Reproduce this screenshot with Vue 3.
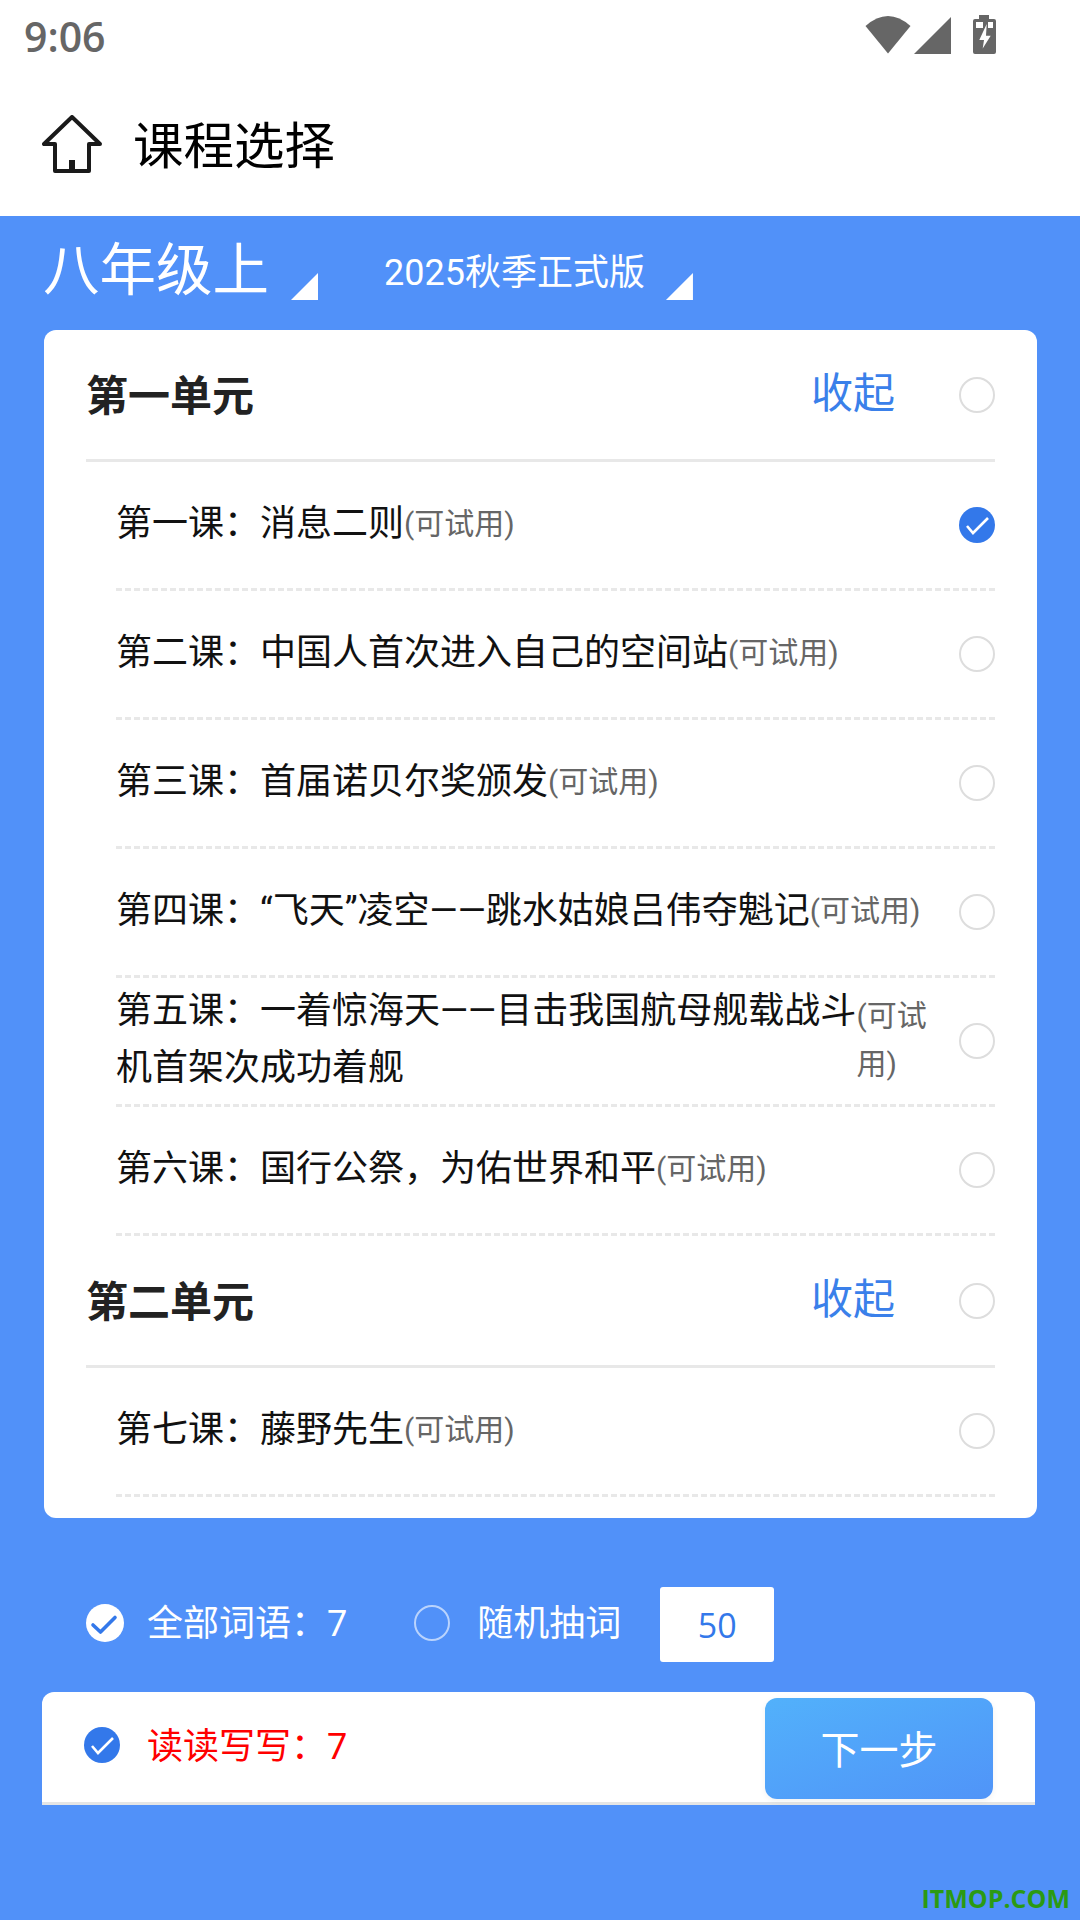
<template>
  <div class="page">
    <!-- STATUS BAR -->
    <div class="status-bar">
      <span class="time">9:06</span>
      <div class="status-icons">
        <svg width="46" height="38" viewBox="0 0 46 38"><path d="M0.5 10 Q23 -10 45.5 10 L23 37.5 Z" fill="#666" /></svg>
        <svg width="38" height="38" viewBox="0 0 38 38"><path d="M38 1 V38 H1 Z" fill="#666" /></svg>
        <svg class="battery" width="23" height="39" viewBox="0 0 23 39">
          <path d="M6 0 H16 V4 H21 Q23 4 23 6 V37 Q23 39 21 39 H2 Q0 39 0 37 V6 Q0 4 2 4 H6 Z" fill="#666" />
          <path d="M3 7 H10 V13 H3 Z M15 7 H20 V13 H15 Z" fill="#fff" />
          <path d="M13.7 9 L6.3 25 H11 L9.7 33.5 L17.7 20.7 H13 Z" fill="#fff" />
        </svg>
      </div>
    </div>

    <!-- HEADER -->
    <header class="app-header">
      <svg class="home" width="60" height="58" viewBox="0 0 60 58" fill="none" stroke="#1a1a1a" stroke-width="4" stroke-linejoin="round" stroke-linecap="round">
        <path d="M30 2 L2 29 H13 V56 H47 V29 H58 Z" />
        <path d="M27 45 H33 V56 H27 Z" fill="#1a1a1a" stroke="none" />
      </svg>
      <span class="title">课程选择</span>
    </header>

    <main class="content">
      <!-- SELECTS -->
      <div class="selects">
        <div class="select grade">
          <span>八年级上</span>
          <i class="corner"></i>
        </div>
        <div class="select version">
          <span>2025秋季正式版</span>
          <i class="corner"></i>
        </div>
      </div>

      <!-- COURSE LIST -->
      <section class="card">
        <div v-for="unit in units" :key="unit.name" class="unit">
          <div class="unit-head">
            <span class="unit-name">{{ unit.name }}</span>
            <span class="collapse">收起</span>
            <span class="radio"></span>
          </div>
          <div v-for="lesson in unit.lessons" :key="lesson.name" class="lesson">
            <div class="lesson-text">
              <span class="lesson-name">{{ lesson.name }}</span>
              <span class="trial">(可试用)</span>
            </div>
            <span v-if="lesson.checked" class="radio checked">
              <svg width="36" height="36" viewBox="0 0 36 36" fill="none" stroke="#fff" stroke-width="2.6"><path d="M8 19 L14 26 L29 11" /></svg>
            </span>
            <span v-else class="radio"></span>
          </div>
        </div>
      </section>

      <!-- WORD OPTIONS -->
      <div class="options">
        <span class="opt-check">
          <svg width="38" height="38" viewBox="0 0 38 38" fill="none" stroke="#3378ea" stroke-width="3.6" stroke-linecap="round" stroke-linejoin="round"><path d="M7 21 L14.5 28 L29 13.5" /></svg>
        </span>
        <span class="opt-label all">全部词语：7</span>
        <span class="opt-radio"></span>
        <span class="opt-label">随机抽词</span>
        <span class="count">50</span>
      </div>

      <!-- BOTTOM BAR -->
      <div class="bottom-bar">
        <span class="radio checked">
          <svg width="36" height="36" viewBox="0 0 36 36" fill="none" stroke="#fff" stroke-width="2.6"><path d="M8 19 L14 26 L29 11" /></svg>
        </span>
        <span class="read-write">读读写写：7</span>
        <button class="next-btn">下一步</button>
      </div>
    </main>

    <span class="watermark">ITMOP.COM</span>
  </div>
</template>

<script setup>
const units = [
  {
    name: '第一单元',
    lessons: [
      { name: '第一课：消息二则', checked: true },
      { name: '第二课：中国人首次进入自己的空间站' },
      { name: '第三课：首届诺贝尔奖颁发' },
      { name: '第四课：“飞天”凌空——跳水姑娘吕伟夺魁记' },
      { name: '第五课：一着惊海天——目击我国航母舰载战斗机首架次成功着舰' },
      { name: '第六课：国行公祭，为佑世界和平' }
    ]
  },
  {
    name: '第二单元',
    lessons: [{ name: '第七课：藤野先生' }]
  }
]
</script>

<style>
body {
  margin: 0;
}
</style>

<style scoped>
.page {
  position: relative;
  width: 1080px;
  height: 1920px;
  overflow: hidden;
  display: flex;
  flex-direction: column;
  background: #fff;
  font-family: Roboto, "Noto Sans CJK SC", sans-serif;
}

/* ===== STATUS BAR ===== */
.status-bar {
  height: 72px;
  flex: none;
  display: flex;
  align-items: center;
  justify-content: space-between;
  padding: 0 84px 0 24px;
}
.time {
  font-family: "Open Sans", sans-serif;
  font-size: 41px;
  font-weight: 600;
  color: #666;
}
.status-icons {
  display: flex;
  align-items: center;
  gap: 2px;
  padding-bottom: 2px;
}
.battery {
  margin-left: 20px;
  margin-top: -1px;
}

/* ===== HEADER ===== */
.app-header {
  height: 144px;
  flex: none;
  display: flex;
  align-items: center;
  padding-left: 42px;
  box-sizing: border-box;
}
.home {
  margin-right: 31px;
}
.title {
  font-size: 50.5px;
  line-height: 60px;
  color: #000;
  margin-top: 6px;
}

/* ===== CONTENT ===== */
.content {
  flex: 1;
  background: #5191f9;
  display: flex;
  flex-direction: column;
}
.selects {
  height: 114px;
  flex: none;
  display: flex;
  align-items: flex-end;
  padding-left: 43px;
  box-sizing: border-box;
}
.select {
  display: flex;
  align-items: flex-end;
  color: #fff;
  padding-bottom: 30px;
}
.grade {
  font-size: 56.5px;
  line-height: 58px;
  margin-right: 66px;
}
.grade .corner {
  margin-left: 22px;
}
.version {
  font-size: 36px;
  line-height: 54px;
}
.version .corner {
  margin-left: 21px;
}
.corner {
  display: block;
  width: 27px;
  height: 27px;
  background: #fff;
  clip-path: polygon(100% 0, 100% 100%, 0 100%);
}

/* ===== CARD ===== */
.card {
  margin: 0 43px 0 44px;
  height: 1188px;
  box-sizing: border-box;
  padding: 0 42px;
  background: #fff;
  border-radius: 12px;
  flex: none;
}
.unit-head {
  height: 132px;
  box-sizing: border-box;
  display: flex;
  align-items: center;
  border-bottom: 3px solid #e8e8e8;
}
.unit-name {
  flex: 1;
  font-size: 42px;
  font-weight: 700;
  color: #222;
  margin-top: -5px;
}
.collapse {
  font-size: 42px;
  color: #3a80ea;
  margin-right: 64px;
  margin-top: -10px;
}
.lesson {
  height: 129px;
  box-sizing: border-box;
  margin-left: 30px;
  display: flex;
  align-items: center;
  border-bottom: 3px dashed #e8e8e8;
}
.lesson-text {
  flex: 1;
  min-width: 0;
  display: flex;
  align-items: center;
  margin-right: 29px;
  padding-bottom: 2px;
}
.lesson-name {
  font-size: 36px;
  line-height: 57px;
  color: #111;
}
.trial {
  flex-shrink: 1.2;
  font-size: 30px;
  line-height: 48px;
  color: #666;
}
.radio {
  flex: none;
  width: 36px;
  height: 36px;
  box-sizing: border-box;
  border-radius: 50%;
  border: 2px solid #ddd;
  background: #fff;
  display: block;
}
.radio.checked {
  border: none;
  background: #3378ea;
}
.radio svg {
  display: block;
}

/* ===== OPTIONS ===== */
.options {
  flex: none;
  height: 75px;
  margin-top: 69px;
  display: flex;
  align-items: center;
  padding-left: 86px;
}
.opt-check {
  width: 38px;
  height: 38px;
  border-radius: 50%;
  background: #fff;
  margin-top: -3px;
}
.opt-check svg {
  display: block;
}
.opt-radio {
  width: 36px;
  height: 36px;
  box-sizing: border-box;
  border-radius: 50%;
  border: 2px solid rgba(255, 255, 255, 0.6);
  margin-left: 67px;
  margin-top: -3px;
}
.opt-label {
  font-size: 36px;
  color: #fff;
  margin-left: 27px;
  line-height: 50px;
  margin-top: -2px;
}
.opt-label.all {
  margin-left: 23px;
}
.count {
  width: 114px;
  height: 75px;
  margin-left: 39px;
  background: #fff;
  border-radius: 3px;
  color: #3378ea;
  font-size: 34px;
  font-family: "Open Sans", sans-serif;
  display: flex;
  align-items: center;
  justify-content: center;
}

/* ===== BOTTOM BAR ===== */
.bottom-bar {
  flex: none;
  height: 113px;
  box-sizing: border-box;
  margin: 30px 45px 0 42px;
  padding: 6px 42px 3px 42px;
  background: #fff;
  border-radius: 12px 12px 0 0;
  border-bottom: 3px solid #e5e5e5;
  display: flex;
  align-items: center;
}
.bottom-bar .radio {
  margin-top: -8px;
}
.read-write {
  flex: 1;
  font-size: 36px;
  color: #f00;
  margin-left: 27px;
  margin-top: -11px;
}
.next-btn {
  width: 228px;
  height: 101px;
  border: none;
  padding: 0 0 4px;
  border-radius: 12px;
  background: linear-gradient(160deg, #52b1fb, #5094f8);
  box-shadow: 0 2px 6px rgba(0, 0, 0, 0.06);
  color: #fff;
  font-family: inherit;
  font-size: 39px;
}

/* ===== WATERMARK ===== */
.watermark {
  position: absolute;
  right: 10px;
  bottom: 5px;
  font-family: "Open Sans", sans-serif;
  font-size: 25px;
  font-weight: 700;
  color: #2b9a13;
}
</style>
